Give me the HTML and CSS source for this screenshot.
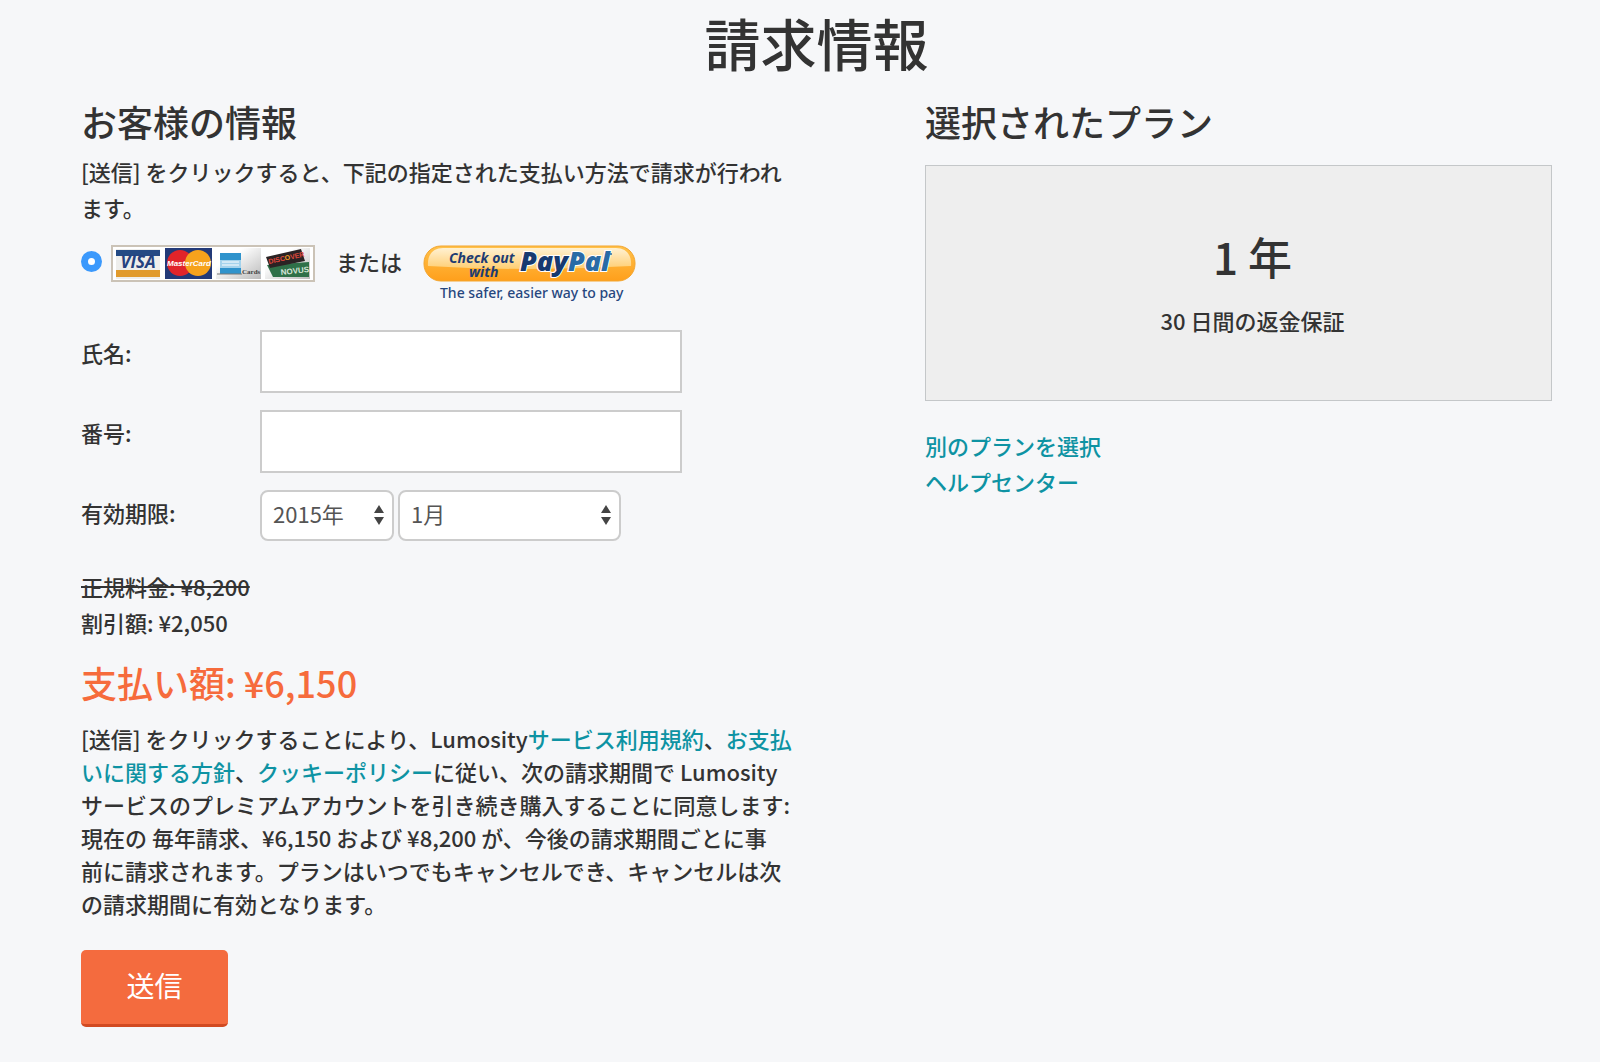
FILE: index.html
```
<!DOCTYPE html>
<html lang="ja">
<head>
    <meta charset="UTF-8">
    <meta name="viewport" content="width=device-width, initial-scale=1.0">
    <title>請求情報</title>
    <link rel="stylesheet" href="styles.css">
</head>
<body>
    <h1>請求情報</h1>

    <div class="columns">
        <form class="billing">
            <h2>お客様の情報</h2>
            <p class="lead">[送信] をクリックすると、下記の指定された支払い方法で請求が行われます。</p>

            <div class="payment">
                <input type="radio" name="method" id="card" class="radio" checked>
                <label for="card" class="cards">
                    <svg width="204" height="37" viewBox="0 0 204 37" role="img" aria-label="VISA MasterCard American Express Discover">
                        <defs>
                            <linearGradient id="fade" x1="0" y1="0" x2="1" y2="1">
                                <stop offset="0.3" stop-color="#fff"/>
                                <stop offset="1" stop-color="#bbb"/>
                            </linearGradient>
                        </defs>
                        <rect x="1" y="1" width="202" height="35" fill="#fff" stroke="#cbc3b7" stroke-width="2"/>
                        <!-- visa -->
                        <rect x="5" y="4" width="44" height="30" fill="#eeeeec"/>
                        <rect x="5" y="5" width="44" height="6" fill="#244a84"/>
                        <rect x="5" y="25" width="44" height="7" fill="#e19a2b"/>
                        <text x="27" y="23" class="visa">VISA</text>
                        <!-- mastercard -->
                        <rect x="54" y="3" width="47" height="31" fill="#233a78"/>
                        <circle cx="69" cy="18" r="13" fill="#e1242a"/>
                        <circle cx="87" cy="18" r="13" fill="#f6a21c"/>
                        <text x="78" y="21" class="master">MasterCard</text>
                        <!-- amex -->
                        <rect x="105" y="3" width="45" height="31" fill="url(#fade)"/>
                        <rect x="109" y="8" width="21" height="21" fill="#2f93cc"/>
                        <rect x="109" y="15" width="21" height="8" fill="#a5d3ec"/>
                        <path d="M111 17h17M111 20h17" stroke="#fff" stroke-width="1"/>
                        <path d="M106 29h25" stroke="#777" stroke-width="1"/>
                        <text x="131" y="29" class="amex">Cards</text>
                        <!-- discover / novus -->
                        <rect x="154" y="3" width="45" height="31" fill="url(#fade)"/>
                        <path d="M156 20L198 17V32H162Z" fill="#2f7048"/>
                        <text x="170" y="30" class="novus" transform="rotate(-6 170 30)">NOVUS</text>
                        <path d="M155 12L190 4L194 16L159 23Z" fill="#2b2324"/>
                        <text x="158" y="19" class="discover" transform="rotate(-12 158 19)">DISC<tspan fill="#f39a25">O</tspan>VER</text>
                    </svg>
                </label>
                <span class="or">または</span>
                <button type="button" class="paypal">
                    <svg width="214" height="58" viewBox="0 0 214 58" role="img" aria-label="Check out with PayPal">
                        <defs>
                            <linearGradient id="gold" x1="0" y1="0" x2="0" y2="1">
                                <stop offset="0" stop-color="#ffc24c"/>
                                <stop offset="1" stop-color="#ff9f1b"/>
                            </linearGradient>
                            <linearGradient id="shine" x1="0" y1="0" x2="0" y2="1">
                                <stop offset="0" stop-color="#fff1d2"/>
                                <stop offset="1" stop-color="#ffce72"/>
                            </linearGradient>
                        </defs>
                        <rect x="1" y="1" width="211" height="35" rx="17" fill="url(#gold)" stroke="#f3a52e"/>
                        <path d="M5 21C4 10 10 3 20 3H193C203 3 209 10 208 21Q106 27 5 21Z" fill="url(#shine)"/>
                        <text x="26" y="18" class="checkout">Check out</text>
                        <text x="46" y="32" class="checkout">with</text>
                        <text x="97" y="26" class="brand">Pay<tspan fill="#2a6ba6">Pal</tspan></text>
                        <circle cx="188" cy="9" r="1" fill="#2a6ba6"/>
                        <text x="17" y="53" class="slogan">The safer, easier way to pay</text>
                    </svg>
                </button>
            </div>

            <div class="field">
                <label for="name">氏名:</label>
                <input type="text" id="name" class="text">
            </div>
            <div class="field">
                <label for="number">番号:</label>
                <input type="text" id="number" class="text">
            </div>
            <div class="field expiry">
                <label for="year">有効期限:</label>
                <div class="selects">
                    <div class="select year">
                        <select id="year">
                            <option>2015年</option>
                            <option>2016年</option>
                            <option>2017年</option>
                        </select>
                        <svg class="arrows" width="10" height="20" viewBox="0 0 10 20"><path d="M5 0L10 8H0ZM5 20L0 12H10Z" fill="#444"/></svg>
                    </div>
                    <div class="select month">
                        <select id="month" aria-label="月">
                            <option>1月</option>
                            <option>2月</option>
                            <option>3月</option>
                        </select>
                        <svg class="arrows" width="10" height="20" viewBox="0 0 10 20"><path d="M5 0L10 8H0ZM5 20L0 12H10Z" fill="#444"/></svg>
                    </div>
                </div>
            </div>

            <div class="prices">
                <del>正規料金: ¥8,200</del>
                <div>割引額: ¥2,050</div>
            </div>
            <p class="total">支払い額: ¥6,150</p>

            <p class="terms">[送信] をクリックすることにより、Lumosity<a href="#">サービス利用規約</a>、<a href="#">お支払いに関する方針</a>、<a href="#">クッキーポリシー</a>に従い、次の請求期間で Lumosity サービスのプレミアムアカウントを引き続き購入することに同意します: 現在の 毎年請求、¥6,150 および ¥8,200 が、今後の請求期間ごとに事<br>前に請求されます。プランはいつでもキャンセルでき、キャンセルは次<br>の請求期間に有効となります。</p>

            <button type="submit" class="submit">送信</button>
        </form>

        <div class="plan">
            <h2>選択されたプラン</h2>
            <div class="plan-box">
                <div class="plan-name">1 年</div>
                <div>30 日間の返金保証</div>
            </div>
            <div class="links">
                <a href="#">別のプランを選択</a>
                <a href="#">ヘルプセンター</a>
            </div>
        </div>
    </div>
</body>
</html>
```
FILE: styles.css
```
* {
    box-sizing: border-box;
}
body {
    margin: 0;
    padding: 2px 48px 32px 81px;
    background-color: #f6f7f9;
    color: #333;
    font-family: "Noto Sans CJK JP", sans-serif;
    font-size: 22px;
    font-weight: 500;
    line-height: 36px;
}
h1 {
    margin: 0;
    font-size: 56px;
    font-weight: 500;
    line-height: 80px;
    text-align: center;
}
h2 {
    margin: 0;
    font-size: 36px;
    font-weight: 500;
    line-height: 48px;
}
p {
    margin: 0;
}
a {
    color: #0e93a3;
    text-decoration: none;
}
a:hover {
    text-decoration: underline;
}
.columns {
    display: grid;
    grid-template-columns: 720fr 627fr;
    column-gap: 124px;
    padding-top: 15px;
}
.lead {
    padding-top: 8px;
}

/* payment method */
.payment {
    display: flex;
    align-items: flex-start;
    padding-top: 20px;
}
.radio {
    appearance: none;
    width: 21px;
    height: 21px;
    margin: 6px 9px 0 0;
    border: 7px solid #3b99fc;
    border-radius: 50%;
    background-color: #fff;
}
.cards svg,
.paypal svg {
    display: block;
}
.or {
    margin: -2px 21px 0;
}
.paypal {
    padding: 0;
    border: none;
    background: none;
    cursor: pointer;
}
.visa {
    font: italic bold 17px "Open Sans", sans-serif;
    fill: #24417f;
    text-anchor: middle;
}
.master {
    font: italic bold 8px "Liberation Sans", sans-serif;
    fill: #fff;
    text-anchor: middle;
}
.amex {
    font: bold 7px "Liberation Serif", serif;
    fill: #444;
}
.novus {
    font: bold 8px "Liberation Sans", sans-serif;
    fill: #d5e5d8;
}
.discover {
    font: bold 7px "Liberation Sans", sans-serif;
    fill: #e0483c;
}
.checkout {
    font: italic bold 14px "Open Sans", sans-serif;
    fill: #1d3c72;
}
.brand {
    font: italic 800 27px "Open Sans", sans-serif;
    fill: #173a70;
    stroke: #fff;
    stroke-width: 2px;
    paint-order: stroke;
}
.slogan {
    font: 500 14px "Noto Sans", sans-serif;
    fill: #27477f;
}

/* form fields */
.field {
    display: grid;
    grid-template-columns: 179px 1fr;
    align-items: start;
    margin-bottom: 17px;
}
.payment + .field {
    margin-top: 27px;
}
.field > label {
    padding-top: 4px;
}
.text {
    width: 78%;
    height: 63px;
    padding: 0 12px;
    border: 2px solid #ccc;
    background-color: #fff;
    font: inherit;
}
.selects {
    display: flex;
    gap: 4px;
}
.select {
    position: relative;
}
.select select {
    appearance: none;
    display: block;
    width: 100%;
    height: 51px;
    padding: 0 28px 6px 11px;
    border: 2px solid #ccc;
    border-radius: 8px;
    background-color: #fff;
    color: #555;
    font: inherit;
    font-weight: 400;
}
.year {
    width: 134px;
}
.month {
    width: 223px;
}
.arrows {
    position: absolute;
    top: 15px;
    right: 10px;
    pointer-events: none;
}

/* prices and terms */
.prices {
    padding-top: 10px;
}
.total {
    padding: 18px 0 16px;
    color: #f66b3c;
    font-size: 36px;
    line-height: 48px;
}
.terms {
    line-height: 33px;
}
.submit {
    width: 147px;
    height: 77px;
    margin-top: 30px;
    padding: 0 0 4px;
    border: none;
    border-bottom: 3px solid #d14a22;
    border-radius: 5px;
    background-color: #f46b3e;
    color: #fff;
    font: inherit;
    font-size: 28px;
    font-weight: 400;
    cursor: pointer;
}

/* selected plan */
.plan-box {
    margin-top: 20px;
    padding: 58px 0 62px 28px;
    border: 1px solid #c4c7c9;
    background-color: #eee;
    text-align: center;
}
.plan-name {
    padding-bottom: 14px;
    font-size: 44px;
    line-height: 64px;
}
.links {
    display: flex;
    flex-direction: column;
    align-items: flex-start;
    padding-top: 26px;
}
```
